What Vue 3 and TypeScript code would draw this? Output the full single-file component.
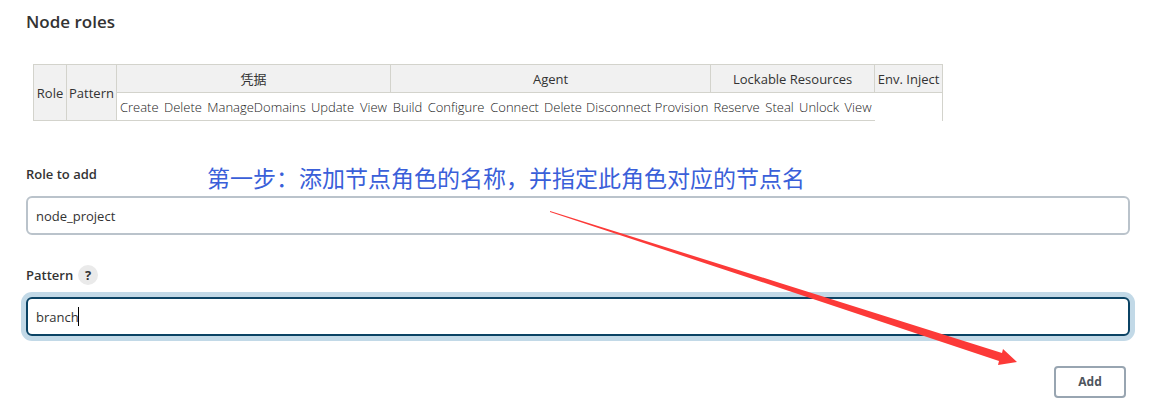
<script setup lang="ts">
import { ref } from 'vue'

interface Permission {
  name: string
  width: number
}

interface Group {
  title: string
  permissions: Permission[]
}

const groups: Group[] = [
  {
    title: '凭据',
    permissions: [
      { name: 'Create', width: 45 },
      { name: 'Delete', width: 43 },
      { name: 'ManageDomains', width: 104 },
      { name: 'Update', width: 48 },
      { name: 'View', width: 34 },
    ],
  },
  {
    title: 'Agent',
    permissions: [
      { name: 'Build', width: 34 },
      { name: 'Configure', width: 63 },
      { name: 'Connect', width: 54 },
      { name: 'Delete', width: 43 },
      { name: 'Disconnect', width: 68 },
      { name: 'Provision', width: 58 },
    ],
  },
  {
    title: 'Lockable Resources',
    permissions: [
      { name: 'Reserve', width: 52 },
      { name: 'Steal', width: 34 },
      { name: 'Unlock', width: 45 },
      { name: 'View', width: 33 },
    ],
  },
]

const permissions = groups.flatMap((g) => g.permissions.map((p) => ({ ...p, key: g.title + p.name })))

const role = ref('node_project')
const pattern = ref('branch')
</script>

<template>
  <main class="page">
    <h2 class="title">Node roles</h2>

    <table class="roles">
      <colgroup>
        <col class="col-role" />
        <col class="col-pattern" />
        <col v-for="p in permissions" :key="p.key" :style="{ width: p.width + 'px' }" />
        <col class="col-env" />
      </colgroup>
      <thead>
        <tr>
          <th class="head" rowspan="2">Role</th>
          <th class="head" rowspan="2">Pattern</th>
          <th v-for="g in groups" :key="g.title" class="head" :colspan="g.permissions.length">{{ g.title }}</th>
          <th class="head">Env. Inject</th>
        </tr>
        <tr>
          <th v-for="p in permissions" :key="p.key" class="permission">{{ p.name }}</th>
          <td class="empty"></td>
        </tr>
      </thead>
    </table>

    <form class="form" @submit.prevent>
      <div class="field">
        <div class="label-row">
          <label for="role">Role to add</label>
        </div>
        <input id="role" v-model="role" class="text" type="text" />
        <p class="note">第一步：添加节点角色的名称，并指定此角色对应的节点名</p>
      </div>

      <div class="field">
        <div class="label-row">
          <label for="pattern">Pattern</label>
          <button class="help" type="button" aria-label="Help for Pattern">?</button>
        </div>
        <input id="pattern" v-model="pattern" class="text active" type="text" />
        <span class="caret" aria-hidden="true"></span>
      </div>

      <div class="actions">
        <button class="add" type="submit">Add</button>
      </div>
    </form>

    <svg class="arrow" width="468" height="156" viewBox="0 0 468 156" aria-hidden="true">
      <path d="M0 0 L230 72 L452 142 L453 138 L467 151 L448 154 L449 150 L230 77 L0 1 Z" fill="#fc3a38" />
    </svg>
  </main>
</template>

<style>
body {
  margin: 0;
  background: #fff;
}
</style>

<style scoped>
.page {
  position: relative;
  box-sizing: border-box;
  padding: 9px 28px 12px 26px;
  color: #333;
  font-family: "Open Sans", "Noto Sans CJK SC", sans-serif;
  font-size: 13px;
  line-height: 20px;
}

.title {
  margin: 0 0 29px;
  font-size: 17px;
  font-weight: 600;
  line-height: 26px;
}

.roles {
  width: 910px;
  margin-left: 7px;
  table-layout: fixed;
  border-collapse: collapse;
}

.col-role {
  width: 33px;
}

.col-pattern {
  width: 50px;
}

.col-env {
  width: 68px;
}

.roles th,
.roles td {
  box-sizing: border-box;
  height: 28px;
  padding: 0;
  font-weight: 400;
  text-align: center;
  white-space: nowrap;
}

.roles .head {
  border: 1px solid #d3d3cc;
  background: #f1f1f1;
}

.roles .permission {
  border-bottom: 1px solid #d3d3cc;
  color: #222;
  font-weight: 300;
}

.roles .empty {
  border-right: 1px solid #d3d3cc;
}

.form {
  margin-top: 43px;
}

.field {
  position: relative;
  margin-bottom: 30px;
}

.label-row {
  display: flex;
  align-items: center;
  gap: 5px;
  height: 20px;
  margin-bottom: 12px;
  font-weight: 600;
}

.text {
  display: block;
  box-sizing: border-box;
  width: 100%;
  height: 39px;
  padding: 0 8px;
  border: 2px solid #bac3cb;
  border-radius: 6px;
  outline: none;
  background: #fff;
  color: #333;
  font: inherit;
}

.active {
  border-color: #0b4364;
  box-shadow: 0 0 0 5px #c2d9e7;
}

.caret {
  position: absolute;
  bottom: 10px;
  left: 52px;
  width: 1px;
  height: 19px;
  background: #000;
}

.help {
  width: 20px;
  height: 20px;
  padding: 0;
  border: 0;
  border-radius: 50%;
  background: #eaeaea;
  color: #333;
  font: inherit;
  font-weight: 700;
}

.note {
  position: absolute;
  top: -3px;
  left: 181px;
  margin: 0;
  color: #3a5fd9;
  font-family: "Noto Sans CJK SC", sans-serif;
  font-size: 23px;
  line-height: 32px;
  white-space: nowrap;
}

.actions {
  display: flex;
  justify-content: flex-end;
  padding-right: 4px;
}

.add {
  width: 72px;
  height: 32px;
  padding: 0;
  border: 2px solid #98a5b1;
  border-radius: 4px;
  background: #fff;
  color: #4d545d;
  font: inherit;
  font-size: 12px;
  font-weight: 700;
}

.arrow {
  position: absolute;
  top: 211px;
  left: 550px;
  pointer-events: none;
}
</style>
